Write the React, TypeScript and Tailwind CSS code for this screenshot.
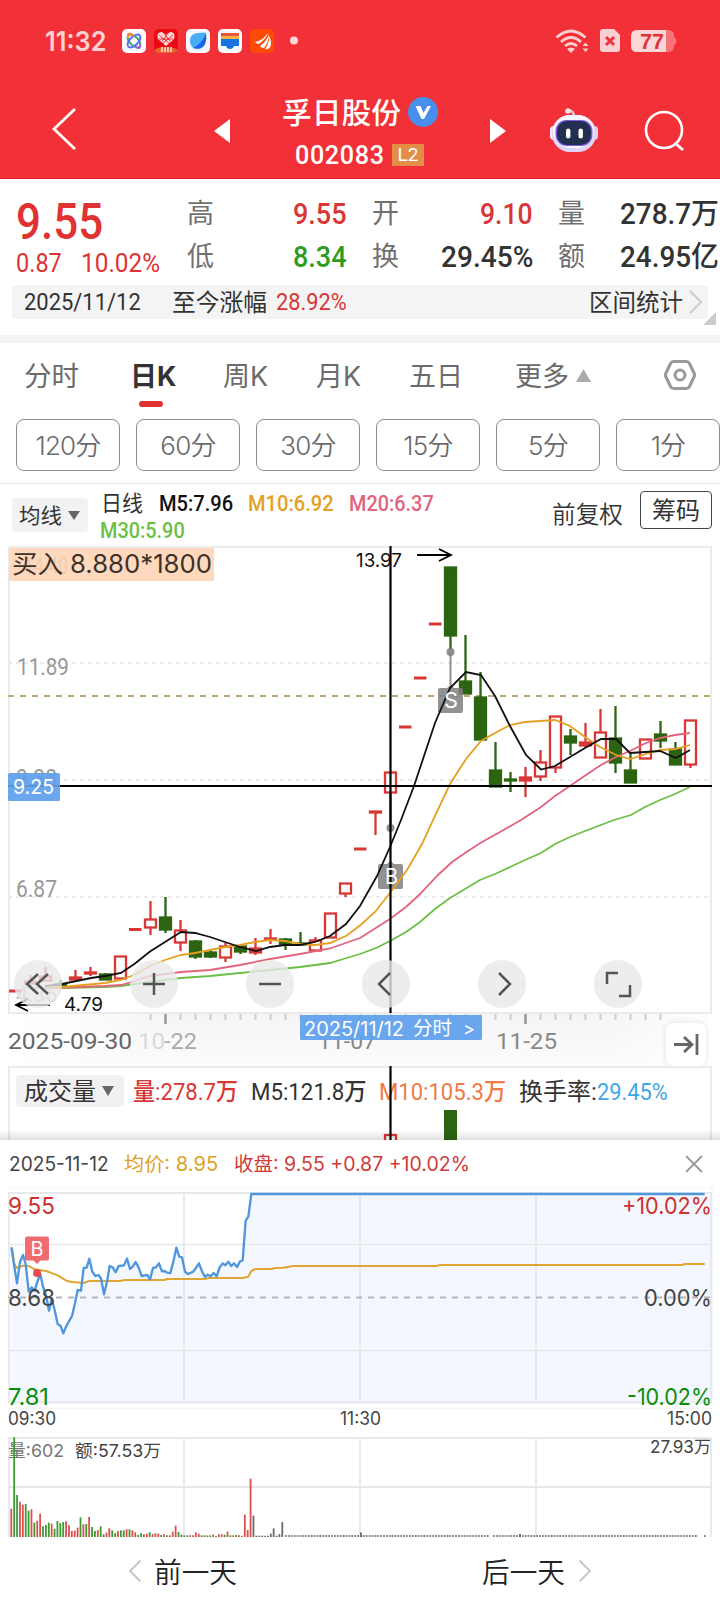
import { ReactNode, useLayoutEffect, useRef, useState } from 'react';

type Candle = {
  x: number;
  kind: 'hollow' | 'red' | 'green' | 'dash';
  top: number;
  bottom: number;
  high?: number;
  low?: number;
};

const RED = '#d93636';
const GREEN = '#2c6412';

const candles: Candle[] = [
  { x: 15.5, kind: 'dash', top: 991, bottom: 991 },
  { x: 30.5, kind: 'red', top: 981, bottom: 984, high: 975, low: 986 },
  { x: 45.5, kind: 'hollow', top: 976, bottom: 981, high: 967 },
  { x: 60.5, kind: 'green', top: 984, bottom: 986, high: 980, low: 988 },
  { x: 75.5, kind: 'red', top: 977, bottom: 980, high: 970 },
  { x: 90.5, kind: 'red', top: 972, bottom: 974, high: 967, low: 976 },
  { x: 105.5, kind: 'green', top: 974, bottom: 980, high: 973 },
  { x: 120.5, kind: 'hollow', top: 956, bottom: 979 },
  { x: 135.5, kind: 'dash', top: 929.5, bottom: 929.5 },
  { x: 150.5, kind: 'hollow', top: 919, bottom: 928, high: 901, low: 935 },
  { x: 165.5, kind: 'green', top: 917, bottom: 930, high: 897, low: 933 },
  { x: 180.5, kind: 'hollow', top: 930, bottom: 943, high: 920, low: 951 },
  { x: 195.5, kind: 'green', top: 941, bottom: 957, high: 940, low: 959 },
  { x: 210.5, kind: 'green', top: 952, bottom: 957, high: 950, low: 958 },
  { x: 225.5, kind: 'hollow', top: 946, bottom: 958, high: 943, low: 962 },
  { x: 240.5, kind: 'green', top: 946, bottom: 952, low: 954 },
  { x: 255.5, kind: 'red', top: 948, bottom: 953, high: 938, low: 955 },
  { x: 270.5, kind: 'red', top: 938, bottom: 940, high: 929, low: 944 },
  { x: 285.5, kind: 'green', top: 939, bottom: 945, high: 938, low: 950 },
  { x: 300.5, kind: 'green', top: 943, bottom: 945, high: 932 },
  { x: 315.5, kind: 'hollow', top: 940, bottom: 951, high: 937 },
  { x: 330.5, kind: 'hollow', top: 913, bottom: 938 },
  { x: 345.5, kind: 'hollow', top: 883, bottom: 894, low: 897 },
  { x: 360.5, kind: 'dash', top: 849, bottom: 849 },
  { x: 375.5, kind: 'red', top: 811, bottom: 813, low: 835 },
  { x: 390.5, kind: 'hollow', top: 772, bottom: 793, low: 826 },
  { x: 405.5, kind: 'dash', top: 727, bottom: 727 },
  { x: 420.5, kind: 'dash', top: 678, bottom: 678 },
  { x: 435.5, kind: 'dash', top: 624, bottom: 624 },
  { x: 450.5, kind: 'green', top: 567, bottom: 636, low: 650 },
  { x: 465.5, kind: 'green', top: 681, bottom: 694, high: 635 },
  { x: 480.5, kind: 'green', top: 697, bottom: 740, high: 672 },
  { x: 495.5, kind: 'green', top: 770, bottom: 787, high: 742 },
  { x: 510.5, kind: 'green', top: 779, bottom: 781, high: 772, low: 792 },
  { x: 525.5, kind: 'red', top: 777, bottom: 781, high: 767, low: 797 },
  { x: 540.5, kind: 'hollow', top: 762, bottom: 777, high: 750, low: 781 },
  { x: 555.5, kind: 'hollow', top: 716, bottom: 768, low: 773 },
  { x: 570.5, kind: 'green', top: 736, bottom: 743, high: 729, low: 755 },
  { x: 585.5, kind: 'red', top: 742, bottom: 746, high: 723, low: 748 },
  { x: 600.5, kind: 'hollow', top: 732, bottom: 758, high: 709 },
  { x: 615.5, kind: 'green', top: 738, bottom: 763, high: 706, low: 773 },
  { x: 630.5, kind: 'green', top: 770, bottom: 783, high: 753 },
  { x: 645.5, kind: 'hollow', top: 739, bottom: 759 },
  { x: 660.5, kind: 'green', top: 734, bottom: 741, high: 721, low: 748 },
  { x: 675.5, kind: 'green', top: 749, bottom: 765, high: 742 },
  { x: 690.5, kind: 'hollow', top: 720, bottom: 765, low: 768 },
];

const averages = [
  {
    color: '#6cbf46',
    points:
      '45,988 62,988 105,987 121,986 135,984 165,980 181,978 210,976 240,973 270,970 300,967 330,963 345,958.5 360,954 376,948 390,941 406,932 420,922 435,909 450,898 465,889 480,880 495,874 510,867 525,860 541,853 555,844 570,837 585,831 614,820 631,815 645,807 660,800 675,794 690,787',
  },
  {
    color: '#e2647c',
    points:
      '50,988 105,986 121,985 135,981 150,976 181,972 210,970 240,965 270,959 300,954 330,948.5 360,938 390,919 406,907 420,894 438,875 452,862 468,851 482,842 500,832 521,820 541,807 555,796 570,786 586,775 601,765 616,757 630,751 646,743 660,738 675,735 690,733',
  },
  {
    color: '#e3a11f',
    points:
      '45,988 62,987 105,983 121,980 135,974.5 150,966 165,960 181,955 195,953 210,950 225,947 240,945 255,942 270,940 285,941 300,944 315,945 330,943 346,936 360,925.5 375,912 390,893 407,870 422,844 433,820 450,784 466,759 481,741 495,733 510,725 525,722 540,721 555,720 570,726 585,737 600,747 616,755 630,759 646,754 660,750 675,749 690,745',
  },
  {
    color: '#111',
    points:
      '45,986 62,984 91,978 105,976 121,973 135,963.5 150,951.5 165,942 181,932 195,933 210,937 225,942 240,947 256,951 270,947 285,945 300,945 315,942 330,936 346,924 360,906 377,876 390,847 401,820 414,786 435,723 450,688 466,672 481,675 495,696 510,726 526,755 541,769.5 555,766 570,757 585,748 601,739 616,739 630,753 645,752 660,751 676,758 690,750',
  },
];

// intraday series, drawn on a 3x grid
const price =
  '34,322 51,430 60,366 69,345 77,372 86,455 95,442 104,452 112,425 121,402 129,440 138,465 147,512 155,475 164,510 173,552 182,558 190,580 199,558 216,528 225,490 233,450 243,452 251,384 260,383 268,356 277,395 286,408 295,405 303,415 312,463 321,425 329,378 338,382 347,397 356,378 372,376 381,356 390,387 398,380 407,366 416,383 425,408 442,405 450,418 459,384 468,382 477,370 486,394 494,393 502,398 511,399 520,365 529,323 538,350 546,352 555,395 564,402 580,395 597,370 606,394 615,411 623,404 632,409 641,399 650,409 659,382 668,370 676,376 685,365 694,378 702,370 711,381 720,364 728,361 737,242 745,230 754,162 2114,162';
const avgPrice =
  '36,322 43,372 51,384 69,377 86,378 104,388 138,393 173,406 199,422 216,426 251,429 268,423 360,423 375,420 494,420 500,417 615,417 625,414 728,414 745,410 754,393 766,387 815,387 825,384 850,383 880,378 1310,378 1320,375 2045,375 2055,372 2114,372';

const volumes =
  'r85 g299 g126 r106 r97 g99 g79 r83 g43 r49 r70 g32 g36 g43 r40 g24 g48 g42 g45 r47 r35 r18 r19 r28 g59 r38 g39 r60 g30 g18 r21 g32 g8 r13 r26 g20 g11 r18 g20 g20 r23 g23 r20 r14 g6 g11 r8 r10 g14 r9 r11 r10 g6 r8 g5 k5 r16 r34 g15 k7 g5 g5 r5 r5 r14 r10 g5 g5 r5 g5 r7 g3 r8 r8 g7 r16 g5 r5 g6 r5 r4 r67 r21 r175 k64 k4 k4 k4 k4 k4 k10 k26 k4 k9 k45'.split(
    ' ',
  );
const volumeColor: Record<string, string> = { r: '#dd4f4f', g: '#3d9a33', k: '#6b6b6b' };

const periods = ['120分', '60分', '30分', '15分', '5分', '1分'];

type FitProps = { className: string; children: ReactNode };

// squeezes one line of text to the width of its box
function Fit({ className, children }: FitProps) {
  const ref = useRef<HTMLSpanElement>(null);
  const [scale, setScale] = useState(1);
  useLayoutEffect(() => {
    const el = ref.current;
    if (!el || !el.parentElement) return;
    setScale(el.parentElement.clientWidth / el.offsetWidth);
  }, []);
  return (
    <span className={`block shrink-0 ${className}`}>
      <span
        ref={ref}
        className="inline-block origin-left whitespace-nowrap"
        style={{ transform: `scaleX(${scale})` }}
      >
        {children}
      </span>
    </span>
  );
}

type LabelProps = {
  x: number;
  y: number;
  w: number;
  size: number;
  fill?: string;
  weight?: number;
  din?: boolean;
  children: ReactNode;
};

function Label({ x, y, w, size, fill = '#444', weight = 400, din, children }: LabelProps) {
  return (
    <text
      x={x}
      y={y}
      textLength={w}
      lengthAdjust="spacingAndGlyphs"
      fontSize={size}
      fontWeight={weight}
      fill={fill}
      className={
        din
          ? "font-['Roboto','Noto_Sans_CJK_SC',sans-serif]"
          : "font-['Inter','Noto_Sans_CJK_SC',sans-serif]"
      }
    >
      {children}
    </text>
  );
}

function StatusBar() {
  return (
    <div className="flex h-[82px] items-center pl-[45px]">
      <Fit className="w-[61px] pt-px text-[27px] leading-[30px] font-semibold text-[#ffd0d2]">
        11:32
      </Fit>
      <svg width="184" height="26" viewBox="0 0 184 26" className="ml-4">
        <rect y="1" width="24" height="24" rx="5" fill="#fbfbfb" />
        <g fill="none" strokeWidth="2">
          <ellipse cx="12" cy="13" rx="8" ry="4.2" transform="rotate(45 12 13)" stroke="#33b46c" />
          <ellipse cx="12" cy="13" rx="8" ry="4.2" transform="rotate(-45 12 13)" stroke="#5b6cf0" />
          <path d="M6 10V7q0-2 3-1l3 2" stroke="#f08a2a" />
          <path d="M18 16v3q-1 2-4 0" stroke="#b455e0" />
        </g>
        <rect x="32" y="1" width="24" height="24" rx="5" fill="#ea0a14" />
        <path d="M44 18l-8-7q-2-6 3-7 3 0 5 3 2-3 5-3 5 1 3 7z" fill="#ffd9d9" />
        <path
          d="M37 7l11 9M51 7l-11 9M41 4l7 9M47 4l-7 9M37 11h14"
          stroke="#ea0a14"
          strokeWidth="0.800"
        />
        <path d="M33 21q11-4 22 0v2q-2 2-4 2H37q-3 0-4-2z" fill="#e8642c" />
        <path d="M40 19v5M43 19v5M46 19v5M49 19v5" stroke="#fff" strokeWidth="1.2" />
        <rect x="64" y="1" width="24" height="24" rx="5" fill="#f5f8ff" />
        <path d="M68 13q0-8 9-8 5-1 7 0 1 6-1 11-3 6-8 5-7-1-7-8z" fill="#49aef8" />
        <path d="M84 5q1 6-1 11-3 6-12 4Q80 16 84 5z" fill="#1f63e6" />
        <rect x="96" y="1" width="24" height="24" rx="5" fill="#f8fafc" />
        <path d="M99 5h18v4H99z" fill="#e8563f" />
        <path d="M99 8h18v4H99z" fill="#f3b13f" />
        <path d="M99 11h18v7h-5q-1 3-4 3t-4-3h-5z" fill="#1673e0" />
        <rect x="128" y="1" width="24" height="24" rx="5" fill="#ff4a05" />
        <path
          d="M133 14q7-1 13-9-2 6-9 11-2 0-4-2zM138 18q7-5 9-12 0 8-5 14-3 0-4-2zM143 21q4-5 4.500-13 3 8 0 12-2 2-4.500 1z"
          fill="#fff"
        />
        <circle cx="172" cy="12.500" r="4" fill="#ffd9da" />
      </svg>
      <svg width="128" height="26" viewBox="0 0 128 26" className="ml-[248px]">
        <g stroke="#fccfd1" strokeWidth="2.800" fill="none">
          <path d="M2.500 9.500q14.500-13 29 0" />
          <path d="M7 14q10-9 20 0" />
          <path d="M11 18q6-5 12 0" />
        </g>
        <path d="M13 21q4-3 8 0l-4 4z" fill="#fccfd1" />
        <path d="M28.500 18l3-3.500 3 3.500zM28.500 20.500l3 3.500 3-3.500z" fill="#fccfd1" />
        <path d="M49 1h11l6 6v14q0 3-3 3H49q-3 0-3-3V4q0-3 3-3z" fill="#fcd0d2" />
        <path d="M52 9l8 8M60 9l-8 8" stroke="#f23037" strokeWidth="3" />
        <path d="M110 2h4q6 0 6 6v10q0 6-6 6h-4z" fill="#f87478" />
        <path d="M120 9q2.500 1 2.500 4t-2.500 4z" fill="#f87478" />
        <path d="M83 2h29v22H83q-6 0-6-6V8q0-6 6-6z" fill="#fcd5d6" />
        <text
          x="86"
          y="21"
          fontSize="22"
          fontWeight="700"
          fill="#e0343a"
          textLength="24"
          lengthAdjust="spacingAndGlyphs"
          className="font-['Liberation_Sans',sans-serif]"
        >
          77
        </text>
      </svg>
    </div>
  );
}

function TitleBar() {
  return (
    <div className="flex h-[97px] items-center">
      <svg width="30" height="48" viewBox="0 0 30 48" className="ml-[49px] -translate-y-px">
        <path d="M26 3L5 23l21 20" stroke="#fff" strokeWidth="2.800" fill="none" />
      </svg>
      <svg width="16" height="24" viewBox="0 0 16 24" className="ml-[135px]">
        <path d="M16 0v24L0 12z" fill="#fff" />
      </svg>
      <div className="ml-[52px] flex w-[157px] flex-col items-start pt-[6px]">
        <div className="flex items-center">
          <Fit className="w-[119px] text-[29px] leading-[34px] font-medium text-white">孚日股份</Fit>
          <svg width="30" height="30" viewBox="0 0 30 30" className="ml-[7px] -translate-y-[2px]">
            <circle cx="15" cy="15" r="15" fill="#488fec" />
            <path d="M7.500 9h5l3 7 4-7H23l-7 13h-2.500z" fill="#fff" />
          </svg>
        </div>
        <div className="mt-[9px] ml-[13px] flex items-center">
          <Fit className="w-[90px] font-['Roboto',sans-serif] text-[26px] leading-[30px] font-medium tracking-wide text-white">
            002083
          </Fit>
          <span className="ml-[7px] flex h-[22px] w-[32px] items-center justify-center bg-[#e28d48] font-['Roboto',sans-serif] text-[19px] text-white">
            L2
          </span>
        </div>
      </div>
      <svg width="16" height="24" viewBox="0 0 16 24" className="ml-[51px]">
        <path d="M0 0v24l16-12z" fill="#fff" />
      </svg>
      <svg width="52" height="46" viewBox="0 0 52 46" className="ml-[43px] -translate-y-px">
        <path d="M25 9q0-5-6-6" stroke="#f3c3d8" strokeWidth="2.500" fill="none" />
        <circle cx="19" cy="4" r="2.800" fill="#fbe3ec" />
        <rect x="1" y="19" width="8" height="14" rx="4" fill="#f6eafa" />
        <rect x="41" y="19" width="8" height="14" rx="4" fill="#e3cdf4" />
        <rect x="3" y="8" width="44" height="37" rx="18" fill="#dfd6f7" />
        <rect x="4" y="8" width="41" height="33" rx="17" fill="#fbf6fd" />
        <rect x="6.500" y="13" width="37" height="26" rx="11" fill="#7a5be0" />
        <rect x="8" y="14" width="34" height="24" rx="10" fill="#222f4f" />
        <rect x="17" y="21.500" width="4.400" height="10" rx="2.200" fill="#fff" />
        <rect x="29.500" y="21.500" width="4.400" height="10" rx="2.200" fill="#fff" />
      </svg>
      <svg width="44" height="44" viewBox="0 0 44 44" className="ml-[43px]">
        <circle cx="20" cy="21" r="18" stroke="#fff" strokeWidth="2.600" fill="none" />
        <path d="M31 34l8 7" stroke="#fff" strokeWidth="2.800" />
      </svg>
    </div>
  );
}

function Quote() {
  const label = 'ml-4 w-[27px] text-[27px] font-normal text-[#707070]';
  return (
    <section className="flex h-[156px] flex-col">
      <div className="mt-[14px] flex h-[88px] font-['Roboto','Noto_Sans_CJK_SC',sans-serif] font-medium">
        <div className="w-[171px] pl-[16px] text-[#e03232]">
          <Fit className="mt-[2px] w-[87px] text-[50px] leading-[54px]">9.55</Fit>
          <div className="flex gap-[19px] text-[25px] leading-[30px] font-[450]">
            <Fit className="w-[46px]">0.87</Fit>
            <Fit className="w-[79px]">10.02%</Fit>
          </div>
        </div>
        <div className="w-[176px] text-[29px] leading-[43px]">
          <div className="flex justify-between">
            <Fit className={label}>高</Fit>
            <Fit className="w-[54px] text-[#d93636]">9.55</Fit>
          </div>
          <div className="flex justify-between">
            <Fit className={label}>低</Fit>
            <Fit className="w-[54px] text-[#2f9a1e]">8.34</Fit>
          </div>
        </div>
        <div className="ml-[9px] w-[177px] text-[29px] leading-[43px]">
          <div className="flex justify-between">
            <Fit className={label}>开</Fit>
            <Fit className="w-[53px] text-[#d93636]">9.10</Fit>
          </div>
          <div className="flex justify-between">
            <Fit className={label}>换</Fit>
            <Fit className="w-[92px] text-[#333]">29.45%</Fit>
          </div>
        </div>
        <div className="ml-[9px] w-[177px] text-[29px] leading-[43px]">
          <div className="flex justify-between">
            <Fit className={label}>量</Fit>
            <Fit className="w-[99px] text-[#333]">278.7万</Fit>
          </div>
          <div className="flex justify-between">
            <Fit className={label}>额</Fit>
            <Fit className="w-[99px] text-[#333]">24.95亿</Fit>
          </div>
        </div>
      </div>
      <div className="relative mx-[12px] mt-1 flex h-[34px] items-center rounded bg-[#f4f4f4] font-['Roboto','Noto_Sans_CJK_SC',sans-serif] text-[24px] leading-[34px] text-[#333]">
        <Fit className="ml-[12px] w-[117px] font-[450]">2025/11/12</Fit>
        <Fit className="ml-[31px] w-[95px] pt-px">至今涨幅</Fit>
        <Fit className="ml-[9px] w-[71px] font-[450] text-[#d93636]">28.92%</Fit>
        <Fit className="ml-[242px] w-[94px] pt-[2px]">区间统计</Fit>
        <svg width="16" height="26" viewBox="0 0 16 26" className="ml-[5px]">
          <path d="M2 2l11 11L2 24" stroke="#ccc" strokeWidth="2" fill="none" />
        </svg>
        <svg width="13" height="13" viewBox="0 0 13 13" className="absolute -right-[8px] -bottom-[6px]">
          <path d="M13 0v13H0z" fill="#ccc" />
        </svg>
      </div>
    </section>
  );
}

function Tabs() {
  return (
    <nav className="flex h-[141px] flex-col border-b border-[#e4e4e4] text-[#6b6b6b]">
      <div className="flex h-[76px] items-start pt-[14px] text-[27px] leading-[40px]">
        <Fit className="ml-[24px] w-[55px]">分时</Fit>
        <div className="ml-[51px] flex flex-col items-start">
          <Fit className="w-[46px] font-bold text-[#333]">日K</Fit>
          <span className="mt-[4px] ml-[9px] h-[6px] w-[24px] rounded-full bg-[#e03232]" />
        </div>
        <Fit className="ml-[47px] w-[45px]">周K</Fit>
        <Fit className="ml-[48px] w-[45px]">月K</Fit>
        <Fit className="ml-[48px] w-[54px]">五日</Fit>
        <Fit className="ml-[52px] w-[54px]">更多</Fit>
        <svg width="15" height="13" viewBox="0 0 15 13" className="mt-[12px] ml-[7px]">
          <path d="M7.500 0L15 13H0z" fill="#aaa" />
        </svg>
        <svg width="32" height="32" viewBox="0 0 32 32" className="mt-[2px] ml-[73px]">
          <path
            d="M9.500 2.500h13q2 0 3 2L30 14q1 2 0 4l-4.500 9.500q-1 2-3 2h-13q-2 0-3-2L2 18q-1-2 0-4l4.500-9.500q1-2 3-2z"
            stroke="#999"
            strokeWidth="3"
            fill="none"
          />
          <circle cx="16" cy="16" r="5" stroke="#999" strokeWidth="3" fill="none" />
        </svg>
      </div>
      <div className="flex gap-4 pl-4">
        {periods.map((period) => (
          <div
            key={period}
            className="flex h-[52px] w-[104px] shrink-0 items-center justify-center rounded-lg border border-[#8c8c8c] pt-px text-[26px] font-[350] tracking-[-0.8px]"
          >
            {period}
          </div>
        ))}
      </div>
    </nav>
  );
}

function AverageBar() {
  return (
    <div className="flex h-[62px] text-[#333]">
      <div className="mt-[14px] ml-[12px] flex h-[34px] w-[76px] items-center rounded bg-[#f2f2f2] pl-[7px] text-[21px]">
        <Fit className="w-[43px] pt-px">均线</Fit>
        <svg width="12" height="9" viewBox="0 0 12 9" className="ml-[6px]">
          <path d="M0 0h12L6 9z" fill="#666" />
        </svg>
      </div>
      <div className="ml-[13px] w-[340px] pt-[6px] font-['Roboto','Noto_Sans_CJK_SC',sans-serif] text-[22px] leading-[27px]">
        <div className="flex font-medium">
          <Fit className="w-[42px] font-normal">日线</Fit>
          <Fit className="ml-[16px] w-[74px] text-[#111]">M5:7.96</Fit>
          <Fit className="ml-[15px] w-[86px] text-[#e3a11f]">M10:6.92</Fit>
          <Fit className="ml-[15px] w-[85px] text-[#e2647c]">M20:6.37</Fit>
        </div>
        <Fit className="-ml-px w-[85px] font-medium text-[#6cbf46]">M30:5.90</Fit>
      </div>
      <Fit className="mt-[13px] ml-[111px] w-[71px] text-[24px] leading-[36px] font-[350]">前复权</Fit>
      <div className="mt-[7px] ml-[17px] flex h-[38px] w-[72px] items-center justify-center rounded border border-[#444] pt-[2px] text-[24px]">
        筹码
      </div>
    </div>
  );
}

function CandleMark({ x, kind, top, bottom, high, low }: Candle) {
  const color = kind === 'green' ? GREEN : RED;
  if (kind === 'dash') {
    return <path d={`M${x - 6.5} ${top}h12.500`} stroke={color} strokeWidth="3" />;
  }
  return (
    <g stroke={color} strokeWidth="2.300">
      {high && <path d={`M${x} ${high}V${top}`} />}
      {low && <path d={`M${x} ${bottom}V${low}`} />}
      <rect
        x={x - 5.5}
        y={top + 0.5}
        width="11"
        height={Math.max(bottom - top - 1, 0.5)}
        fill={kind === 'hollow' ? '#fff' : color}
      />
    </g>
  );
}

function CandleChart() {
  const ticks = candles.map((c) => c.x).filter((x) => x > 140 && x < 670);
  const toolIcons = [
    'M24 14L13 24l11 10M34 14L23 24l11 10',
    'M24 13v22M13 24h22',
    'M13 24h22',
    'M28 13L17 24l11 11',
    'M21 13l11 11-11 11',
    'M13 24V13h11M36 25v11H25',
  ];
  return (
    <section className="relative h-[520px]">
      <svg width="720" height="520" viewBox="0 546 720 520" className="block">
        <defs>
          <linearGradient id="axis" x1="0" x2="0" y1="0" y2="1">
            <stop offset="0" stopColor="#f5f5f5" />
            <stop offset="1" stopColor="#fcfcfc" />
          </linearGradient>
          <linearGradient id="fadeLeft" x1="0" x2="1" y1="0" y2="0">
            <stop offset="0" stopColor="#fff" />
            <stop offset="0.500" stopColor="#fcfcfc" />
            <stop offset="1" stopColor="#f9f9f9" stopOpacity="0" />
          </linearGradient>
          <linearGradient id="fadeRight" x1="1" x2="0" y1="0" y2="0">
            <stop offset="0" stopColor="#fff" />
            <stop offset="1" stopColor="#fff" stopOpacity="0" />
          </linearGradient>
        </defs>
        <rect x="9" y="547" width="702" height="466" fill="none" stroke="#ebebeb" strokeWidth="2" />
        <path
          d="M8 663h703M8 780h703M8 897h703"
          stroke="#ebebeb"
          strokeWidth="2"
          strokeDasharray="4 4"
        />
        <path d="M8 696h702" stroke="#b9ab7a" strokeWidth="2" strokeDasharray="6 6" />
        <g>
          <Label x={17} y={675} w={52} size={24} fill="#999" weight={450} din>
            11.89
          </Label>
          <Label x={16} y={786} w={41} size={24} fill="#999" weight={450} din>
            9.38
          </Label>
          <Label x={16} y={897} w={41} size={24} fill="#999" weight={450} din>
            6.87
          </Label>
          <Label x={16} y={1002} w={41} size={22} fill="#bbb" weight={450} din>
            4.36
          </Label>
        </g>
        {candles.map((c) => (
          <CandleMark key={c.x} {...c} />
        ))}
        <path d="M450.500 652v36" stroke="#8f8f8f" strokeWidth="2" />
        <g fill="#7f7f7f" fillOpacity="0.850">
          <circle cx="450.500" cy="652" r="4" />
          <circle cx="390.500" cy="828" r="4" />
          <path d="M440 688h7l3.500-3 3.500 3h7q2 0 2 2v21q0 2-2 2h-21q-2 0-2-2v-21q0-2 2-2z" />
          <path d="M380 864h7l3.500-3 3.500 3h7q2 0 2 2v21q0 2-2 2h-21q-2 0-2-2v-21q0-2 2-2z" />
        </g>
        {averages.map((line) => (
          <polyline
            key={line.color}
            points={line.points}
            fill="none"
            stroke={line.color}
            strokeWidth="1.800"
          />
        ))}
        <Label x={444} y={708} w={14} size={21} fill="#fff">
          S
        </Label>
        <path d="M390.500 546v467" stroke="#000" strokeWidth="2.200" />
        <path d="M8 786h704" stroke="#000" strokeWidth="2.200" />
        <Label x={385} y={884} w={13} size={21} fill="#fff">
          B
        </Label>
        <Label x={356} y={567} w={46} size={19} fill="#111">
          13.97
        </Label>
        <path d="M417 555h33M439 549l12 6-12 6" stroke="#000" strokeWidth="1.800" fill="none" />
        <path d="M50 1005H16M28 999l-12 6 12 6" stroke="#000" strokeWidth="1.800" fill="none" />
        <Label x={64} y={1011} w={39} size={19} fill="#111">
          4.79
        </Label>
        <rect x="9" y="548" width="205" height="33" fill="#ffd9bd" />
        <Label x={24} y={574} w={44} size={24} fill="#f0cdb2" din>
          14.40
        </Label>
        <g className="[font-feature-settings:'calt'_0]">
          <Label x={12} y={573} w={51} size={25} fill="#3c3229">
            买入
          </Label>
          <Label x={70} y={573} w={142} size={25.5} fill="#3c3229">
            8.880*1800
          </Label>
        </g>
        <rect x="8" y="773" width="52" height="28" rx="1.500" fill="#5f9fec" fillOpacity="0.920" />
        <Label x={13} y={794} w={41} size={20.500} fill="#fff">
          9.25
        </Label>

        <rect x="8" y="1014" width="704" height="52" fill="url(#axis)" />
        <rect x="8" y="1014" width="160" height="52" fill="url(#fadeLeft)" />
        <rect x="612" y="1014" width="100" height="52" fill="url(#fadeRight)" />
        {ticks.map((x) => (
          <path key={x} d={`M${x} 1014v6`} stroke="#ccc" strokeWidth="2" />
        ))}
        <path d="M165.500 1014v10M525.500 1014v10" stroke="#999" strokeWidth="2.500" />
        <Label x={8} y={1049} w={124} size={22.500} fill="#666" weight={450} din>
          2025-09-30
        </Label>
        <Label x={138} y={1049} w={27} size={22.500} fill="#d8d8d8" din>
          10
        </Label>
        <Label x={164} y={1049} w={33} size={22.500} fill="#aaa" din>
          -22
        </Label>
        <Label x={318} y={1049} w={58} size={22.500} fill="#888" din>
          11-07
        </Label>
        <Label x={496} y={1049} w={61} size={22.500} fill="#888" weight={450} din>
          11-25
        </Label>
        <rect x="300" y="1015" width="182" height="25" rx="1.500" fill="#5f9fec" fillOpacity="0.930" />
        <Label x={304} y={1036} w={100} size={19.500} fill="#fff">
          2025/11/12
        </Label>
        <Label x={413} y={1035} w={39} size={19.500} fill="#fff">
          分时
        </Label>
        <Label x={463} y={1035} w={12} size={18} fill="#fff">
          &gt;
        </Label>
      </svg>
      <div className="absolute top-[414px] left-[14px] flex gap-[68px]">
        {toolIcons.map((d) => (
          <button key={d} className="h-12 w-12 rounded-full bg-[#e9e9e9]/80">
            <svg width="48" height="48" viewBox="0 0 48 48">
              <path d={d} stroke="#555" strokeWidth="2.500" fill="none" />
            </svg>
          </button>
        ))}
      </div>
      <button className="absolute top-[477px] left-[666px] h-[43px] w-[40px] rounded-lg bg-white shadow-[0_0_6px_rgba(0,0,0,0.12)]">
        <svg width="40" height="43" viewBox="0 0 40 43">
          <path d="M8 21.500h17M18 14l8 7.500-8 7.500M31 11v21" stroke="#666" strokeWidth="2.800" fill="none" />
        </svg>
      </button>
    </section>
  );
}

function VolumePane() {
  return (
    <section className="relative h-[74px] overflow-hidden">
      <div className="flex items-center pt-[8px] font-['Roboto','Noto_Sans_CJK_SC',sans-serif] text-[24px] leading-[32px] text-[#333]">
        <div className="ml-[16px] flex h-[32px] w-[108px] items-center rounded bg-[#f1f1f1] pl-[8px]">
          <Fit className="w-[72px] pt-px">成交量</Fit>
          <svg width="12" height="10" viewBox="0 0 12 10" className="ml-[6px]">
            <path d="M0 0h12L6 10z" fill="#666" />
          </svg>
        </div>
        <div className="flex pt-[2px] font-[450]">
          <Fit className="ml-[9px] w-[105px] text-[#d93636]">量:278.7万</Fit>
          <Fit className="ml-[13px] w-[116px]">M5:121.8万</Fit>
          <Fit className="ml-[12px] w-[127px] text-[#ee7a46]">M10:105.3万</Fit>
          <Fit className="ml-[13px] w-[78px] font-normal">换手率:</Fit>
          <Fit className="w-[71px] text-[#43a6e6]">29.45%</Fit>
        </div>
      </div>
      <svg width="720" height="74" viewBox="0 1066 720 74" className="absolute inset-0">
        <path d="M9 1140v-73h702v73" fill="none" stroke="#ebebeb" strokeWidth="2" />
        <rect x="444" y="1110" width="13" height="30" fill={GREEN} />
        <rect x="385" y="1135" width="11" height="10" fill="none" stroke={RED} strokeWidth="2.300" />
        <path d="M390.500 1066v74" stroke="#000" strokeWidth="2.200" />
      </svg>
      <div className="absolute inset-x-0 bottom-0 h-[10px] bg-linear-to-b from-transparent to-black/12" />
    </section>
  );
}

function IntradayPanel() {
  return (
    <section className="bg-white">
      <div className="flex h-[47px] items-center text-[19.5px] leading-[47px]">
        <Fit className="ml-[9px] w-[100px] pt-[2px] text-[#444]">2025-11-12</Fit>
        <Fit className="ml-[15px] w-[94px] pt-[2px] text-[#e0a020]">均价: 8.95</Fit>
        <Fit className="ml-[16px] w-[236px] pt-[2px] text-[#cf3a3a]">收盘: 9.55 +0.87 +10.02%</Fit>
        <svg width="18" height="18" viewBox="0 0 18 18" className="ml-[215px]">
          <path d="M1 1l16 16M17 1L1 17" stroke="#999" strokeWidth="1.800" />
        </svg>
      </div>
      <svg width="720" height="353" viewBox="0 1187 720 353" className="block">
        <g transform="translate(0 1140) scale(0.333333)">
          <polygon points={`34,787 ${price} 2114,165 2140,165 2140,787 26,787 26,330`} fill="#f4f8fe" />
        </g>
        <path d="M8 1187h704v5M8 1408.500h704" stroke="#f4f4f4" strokeWidth="1.500" fill="none" />
        <g fill="none" stroke="#e6e8ec" strokeWidth="1.800">
          <path d="M9 1193v209.500h702V1193zM184 1193v209M360 1193v209M536 1193v209" />
          <path d="M9 1244.500h702M9 1350.500h702" strokeWidth="1.400" />
          <path d="M9 1438v99M184 1438v99M360 1438v99M536 1438v99M711 1438v99M8 1438h704M8 1487h704" />
        </g>
        <path d="M8 1297.500h702" stroke="#b3b5bb" strokeWidth="2" strokeDasharray="6 6" />
        <g transform="translate(0 1140) scale(0.333333)" fill="none" strokeLinejoin="round">
          <polyline points={avgPrice} stroke="#dfa632" strokeWidth="6" />
          <polyline points={price} stroke="#4f96dd" strokeWidth="7" />
        </g>
        <circle cx="37" cy="1273" r="4" fill="#ea4a52" />
        <path
          d="M27 1236.500h20q2 0 2 2v20q0 2-2 2h-6.500l-3.500 3.500-3.500-3.500H27q-2 0-2-2v-20q0-2 2-2z"
          fill="#ee6b70"
        />
        <Label x={30.500} y={1256} w={13} size={20.500} fill="#fff">
          B
        </Label>
        <Label x={8} y={1213.500} w={47} size={23.500} fill="#cf3030">
          9.55
        </Label>
        <Label x={8} y={1305.500} w={47} size={23.500}>
          8.68
        </Label>
        <Label x={8} y={1404.500} w={41} size={23.500} fill="#0b8f0b">
          7.81
        </Label>
        <Label x={622} y={1213.500} w={90} size={23.500} fill="#cf3030">
          +10.02%
        </Label>
        <Label x={644} y={1305.500} w={68} size={23.500}>
          0.00%
        </Label>
        <Label x={627} y={1404.500} w={85} size={23.500} fill="#0b8f0b">
          -10.02%
        </Label>
        <Label x={8} y={1425} w={48} size={18}>
          09:30
        </Label>
        <Label x={340} y={1425} w={41} size={18}>
          11:30
        </Label>
        <Label x={667} y={1425} w={45} size={18}>
          15:00
        </Label>
        <Label x={8} y={1457} w={56} size={17.500} fill="#777">
          量:602
        </Label>
        <Label x={75} y={1457} w={86} size={17.500}>
          额:57.53万
        </Label>
        <Label x={650} y={1453} w={61} size={17.500}>
          27.93万
        </Label>
        {volumes.map((v, i) => (
          <path
            key={i}
            d={`M${11.3 + i * 2.883} 1537v-${Number(v.slice(1)) / 3}`}
            stroke={volumeColor[v[0]]}
            strokeWidth="1.800"
          />
        ))}
        <path d="M285 1536h204M493 1536h205M704 1536h2" stroke="#666" strokeWidth="1.600" strokeDasharray="1.900 0.983" />
        <path d="M361 1537v-4.500M520 1537v-3" stroke="#666" strokeWidth="1.800" />
      </svg>
      <div className="flex h-[64px] items-center text-[28px] leading-[64px] font-[350] text-[#222]">
        <svg width="14" height="24" viewBox="0 0 14 24" className="ml-[128px] -translate-y-px">
          <path d="M12.500 1.500L2 12l10.500 10.500" stroke="#c8c8c8" strokeWidth="2" fill="none" />
        </svg>
        <Fit className="ml-[12px] w-[83px] pt-[2px]">前一天</Fit>
        <Fit className="ml-[245px] w-[83px] pt-[2px]">后一天</Fit>
        <svg width="14" height="24" viewBox="0 0 14 24" className="ml-[13px] -translate-y-px">
          <path d="M1.500 1.500L12 12 1.500 22.500" stroke="#c8c8c8" strokeWidth="2" fill="none" />
        </svg>
      </div>
    </section>
  );
}

function App() {
  return (
    <main className="h-[1604px] w-[720px] overflow-hidden bg-white font-['Inter','Noto_Sans_CJK_SC',sans-serif]">
      <header className="h-[179px] border-b border-[#d8262d] bg-[#f23037]">
        <StatusBar />
        <TitleBar />
      </header>
      <Quote />
      <div className="h-2 bg-[#f3f3f3]" />
      <Tabs />
      <AverageBar />
      <CandleChart />
      <VolumePane />
      <IntradayPanel />
    </main>
  );
}

export default App;
